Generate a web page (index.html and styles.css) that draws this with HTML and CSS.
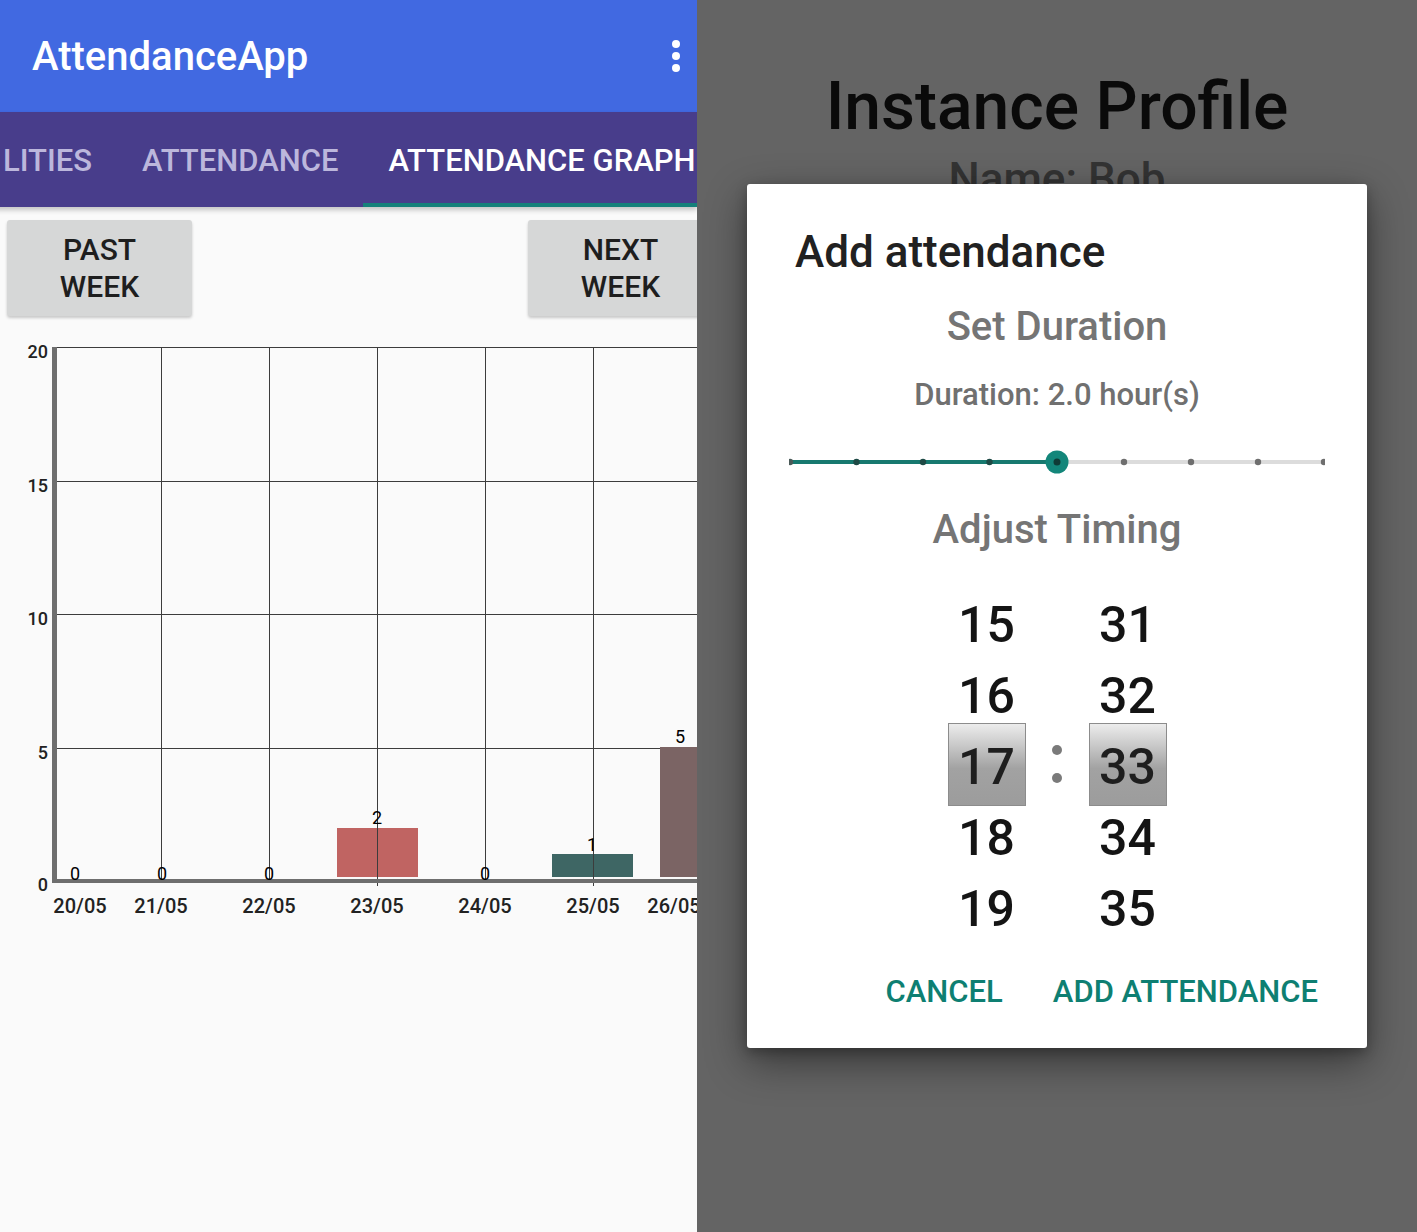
FILE: index.html
```html
<!DOCTYPE html>
<html>
<head>
<meta charset="utf-8">
<link rel="stylesheet" href="styles.css">
</head>
<body>
<div class="screen">
  <section class="left">
    <header class="appbar">
      <span class="app-title">AttendanceApp</span>
      <span class="kebab"><i></i><i></i><i></i></span>
    </header>
    <nav class="tabs">
      <span class="tab">LITIES</span>
      <span class="tab">ATTENDANCE</span>
      <span class="tab active">ATTENDANCE GRAPH</span>
    </nav>
    <div class="content">
      <div class="week-row">
        <button class="week-btn">PAST<br>WEEK</button>
        <button class="week-btn">NEXT<br>WEEK</button>
      </div>
      <svg class="chart" width="697" height="600" viewBox="0 330 697 600">
        <g class="grid">
          <line x1="54" y1="347.5" x2="697" y2="347.5"/>
          <line x1="54" y1="481.5" x2="697" y2="481.5"/>
          <line x1="54" y1="614.5" x2="697" y2="614.5"/>
          <line x1="54" y1="748.5" x2="697" y2="748.5"/>
          <line x1="161.5" y1="347" x2="161.5" y2="880"/>
          <line x1="269.5" y1="347" x2="269.5" y2="880"/>
          <line x1="377.5" y1="347" x2="377.5" y2="886"/>
          <line x1="485.5" y1="347" x2="485.5" y2="880"/>
          <line x1="593.5" y1="347" x2="593.5" y2="886"/>
        </g>
        <rect x="337" y="828" width="81" height="49" fill="#c06462"/>
        <rect x="552" y="854" width="81" height="23" fill="#3e6664"/>
        <rect x="660" y="747" width="81" height="130" fill="#7b6464"/>
        <rect x="52" y="347" width="5" height="536" fill="#6e6e6e"/>
        <rect x="52" y="879" width="645" height="4" fill="#6e6e6e"/>
        <line class="grid" x1="377.5" y1="828" x2="377.5" y2="877"/>
        <line class="grid" x1="593.5" y1="854" x2="593.5" y2="877"/>
        <g class="ylabels">
          <text x="48" y="358">20</text>
          <text x="48" y="492">15</text>
          <text x="48" y="625">10</text>
          <text x="48" y="759">5</text>
          <text x="48" y="891">0</text>
        </g>
        <g class="vals">
          <text x="75" y="880">0</text>
          <text x="162" y="880">0</text>
          <text x="269" y="880">0</text>
          <text x="377" y="824">2</text>
          <text x="485" y="880">0</text>
          <text x="592" y="851">1</text>
          <text x="680" y="743">5</text>
        </g>
        <g class="xlabels">
          <text x="80" y="913">20/05</text>
          <text x="161" y="913">21/05</text>
          <text x="269" y="913">22/05</text>
          <text x="377" y="913">23/05</text>
          <text x="485" y="913">24/05</text>
          <text x="593" y="913">25/05</text>
          <text x="674" y="913">26/05</text>
        </g>
      </svg>
    </div>
  </section>
  <section class="right">
    <h1 class="profile-title">Instance Profile</h1>
    <p class="profile-name">Name: Bob</p>
    <div class="dialog">
      <h2 class="dlg-title">Add attendance</h2>
      <h3 class="dlg-sub">Set Duration</h3>
      <p class="dlg-dur">Duration: 2.0 hour(s)</p>
      <svg class="slider" width="536" height="40" viewBox="0 0 536 40">
        <line x1="0" y1="20" x2="536" y2="20" stroke="#dcdcdc" stroke-width="4"/>
        <line x1="0" y1="20" x2="268" y2="20" stroke="#17796f" stroke-width="4"/>
        <circle cx="1" cy="20" r="3.2" fill="#4a5a58"/>
        <circle cx="67.5" cy="20" r="3.2" fill="#1e4a45"/>
        <circle cx="134" cy="20" r="3.2" fill="#1e4a45"/>
        <circle cx="200.5" cy="20" r="3.2" fill="#1e4a45"/>
        <circle cx="268" cy="20" r="11.5" fill="#13867a"/>
        <circle cx="268" cy="20" r="3.5" fill="#0f3b36"/>
        <circle cx="335" cy="20" r="3.2" fill="#6e6e6e"/>
        <circle cx="402" cy="20" r="3.2" fill="#6e6e6e"/>
        <circle cx="469" cy="20" r="3.2" fill="#6e6e6e"/>
        <circle cx="535" cy="20" r="3.2" fill="#6e6e6e"/>
      </svg>
      <h3 class="dlg-sub timing">Adjust Timing</h3>
      <div class="picker">
        <div class="col">
          <span class="num">15</span>
          <span class="num">16</span>
          <span class="num sel">17</span>
          <span class="num">18</span>
          <span class="num">19</span>
        </div>
        <div class="colon"><i></i><i></i></div>
        <div class="col">
          <span class="num">31</span>
          <span class="num">32</span>
          <span class="num sel">33</span>
          <span class="num">34</span>
          <span class="num">35</span>
        </div>
      </div>
      <div class="actions">
        <span class="act">CANCEL</span>
        <span class="act">ADD ATTENDANCE</span>
      </div>
    </div>
  </section>
</div>
</body>
</html>
```

FILE: styles.css
```css
* { box-sizing: border-box; }
html, body { margin: 0; padding: 0; }
body {
  font-family: Roboto, "Noto Sans", "Liberation Sans", sans-serif;
  width: 1417px;
  height: 1232px;
  overflow: hidden;
}
.screen {
  display: flex;
  width: 1417px;
  height: 1232px;
}
.left {
  width: 697px;
  height: 1232px;
  overflow: hidden;
  background: #fafafa;
  display: flex;
  flex-direction: column;
  position: relative;
}
.appbar {
  height: 112px;
  background: #4169e1;
  display: flex;
  align-items: center;
  justify-content: space-between;
  padding: 0 17px 0 32px;
  flex: none;
}
.app-title {
  color: #fff;
  font-size: 40px;
  font-weight: 500;
  line-height: 50px;
  margin-top: 2px;
}
.kebab {
  display: flex;
  flex-direction: column;
  gap: 4px;
  margin-top: 0;
}
.kebab i {
  display: block;
  width: 8px;
  height: 8px;
  border-radius: 50%;
  background: #fff;
}
.tabs {
  height: 95px;
  background: #483d8b;
  display: flex;
  align-items: stretch;
  flex: none;
  margin-left: -22px;
  white-space: nowrap;
  position: relative;
  z-index: 2;
  box-shadow: 0 3px 5px rgba(0,0,0,0.22);
}
.tab {
  padding: 0 25px;
  display: flex;
  align-items: center;
  font-size: 31px;
  font-weight: 500;
  color: #bcb7dc;
  border-bottom: 4px solid transparent;
  padding-top: 6px;
  flex: none;
}
.tab.active {
  color: #fff;
  border-bottom-color: #15807a;
}
.content {
  flex: 1;
  display: flex;
  flex-direction: column;
}
.week-row {
  display: flex;
  justify-content: space-between;
  padding: 13px 0 0 7px;
  margin-right: -16px;
}
.week-btn {
  width: 185px;
  height: 96px;
  border: none;
  border-radius: 3px;
  background: #d6d7d7;
  box-shadow: 0 2px 3px rgba(0,0,0,0.2);
  font-family: Roboto, "Noto Sans", "Liberation Sans", sans-serif;
  font-size: 30px;
  font-weight: 500;
  line-height: 37px;
  color: #1e1e1e;
  padding: 0;
}
.chart {
  display: block;
  margin-top: 14px;
  font-family: Roboto, "Noto Sans", "Liberation Sans", sans-serif;
}
.grid line, line.grid {
  stroke: #3c3c3c;
  stroke-width: 1;
}
.ylabels text {
  font-size: 18px;
  font-weight: 500;
  fill: #222;
  text-anchor: end;
}
.vals text {
  font-size: 18px;
  fill: #000;
  text-anchor: middle;
}
.xlabels text {
  font-size: 20px;
  font-weight: 500;
  fill: #222;
  text-anchor: middle;
}
.right {
  flex: 1;
  background: #646464;
  position: relative;
  display: flex;
  flex-direction: column;
  align-items: center;
  overflow: hidden;
}
.profile-title {
  margin: 67px 0 0;
  font-size: 66px;
  font-weight: 500;
  line-height: 80px;
  color: #0a0a0a;
}
.profile-name {
  margin: 7px 0 0;
  font-size: 44px;
  font-weight: 500;
  line-height: 50px;
  color: #333;
}
.dialog {
  position: absolute;
  left: 50px;
  top: 184px;
  width: 620px;
  height: 864px;
  background: #fff;
  border-radius: 3px;
  box-shadow: 0 14px 40px rgba(0,0,0,0.45), 0 4px 12px rgba(0,0,0,0.25);
  display: flex;
  flex-direction: column;
  align-items: center;
  padding-top: 43px;
}
.dlg-title {
  align-self: flex-start;
  margin: 0 0 0 48px;
  font-size: 44px;
  font-weight: 500;
  line-height: 50px;
  color: #212121;
}
.dlg-sub {
  margin: 25px 0 0;
  font-size: 40px;
  font-weight: 500;
  line-height: 50px;
  color: #757575;
}
.dlg-dur {
  margin: 23px 0 0;
  font-size: 31px;
  font-weight: 500;
  line-height: 40px;
  color: #707070;
}
.slider {
  display: block;
  margin-top: 27px;
}
.dlg-sub.timing {
  margin-top: 23px;
}
.picker {
  margin-top: 35px;
  display: flex;
  justify-content: center;
}
.col {
  width: 78px;
  display: flex;
  flex-direction: column;
  align-items: center;
}
.num {
  height: 71px;
  line-height: 71px;
  font-size: 50px;
  font-weight: 500;
  color: #141414;
  display: flex;
  align-items: center;
  justify-content: center;
  width: 78px;
}
.num.sel {
  height: 83px;
  margin: -9px 0 -3px;
  padding-top: 5px;
  border: 1.5px solid #8c8c8c;
  background: linear-gradient(to bottom, #ececec 0%, #c4c4c4 30%, #a2a2a2 55%, #9c9c9c 100%);
  color: #1e1e1e;
}
.colon {
  width: 63px;
  display: flex;
  flex-direction: column;
  align-items: center;
  justify-content: center;
  gap: 18px;
  padding-bottom: 8px;
}
.colon i {
  display: block;
  width: 10px;
  height: 10px;
  border-radius: 50%;
  background: #7a7a7a;
}
.actions {
  align-self: flex-end;
  margin: 27px 49px 0 0;
  display: flex;
  gap: 50px;
}
.act {
  font-size: 31px;
  font-weight: 500;
  line-height: 40px;
  color: #0e7f72;
}
```
